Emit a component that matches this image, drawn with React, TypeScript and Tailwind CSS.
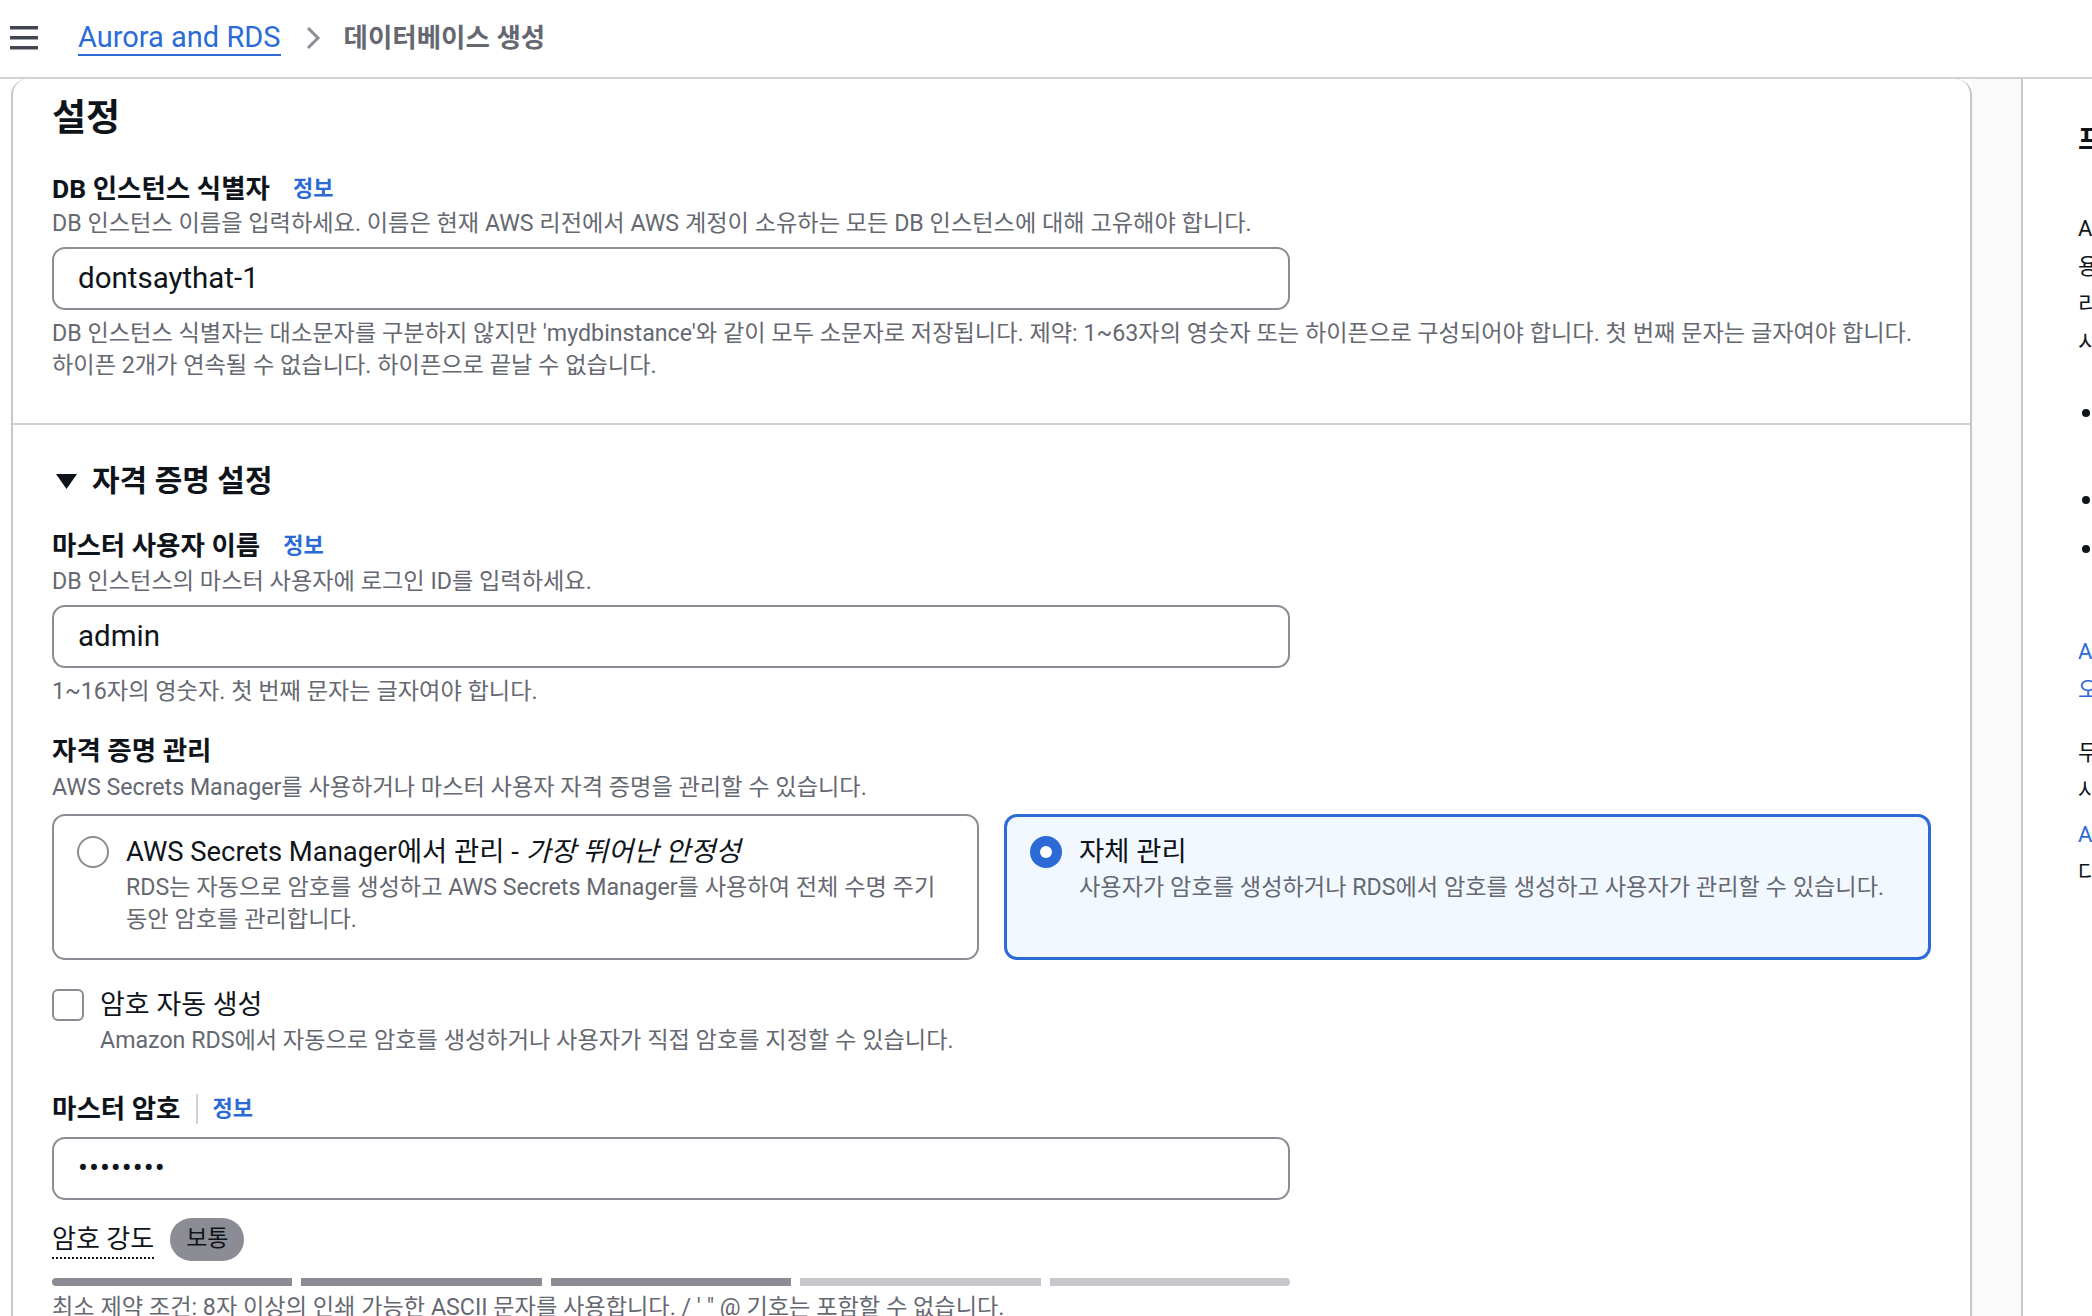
import React from "react";

function InfoLink() {
  return <span className="text-[22px] font-bold leading-[32px] text-[#2c6bd6]">정보</span>;
}

function Label({ children, info = true }: { children: React.ReactNode; info?: boolean }) {
  return (
    <div className="flex items-center gap-[23px]">
      <span className="text-[26.5px] font-bold leading-[32px] text-[#0f141a]">{children}</span>
      {info && <InfoLink />}
    </div>
  );
}

function Desc({ children, className = "" }: { children: React.ReactNode; className?: string }) {
  return <p className={`text-[23.2px] leading-[32px] text-[#656871] ${className}`}>{children}</p>;
}

function TextInput({ value, className = "" }: { value: string; className?: string }) {
  return (
    <div
      className={`flex h-[63px] w-[1238px] items-center rounded-[13px] border-2 border-[#8c8c94] bg-white px-[24px] text-[29.5px] text-[#0f141a] ${className}`}
    >
      {value}
    </div>
  );
}

function RadioCard({
  selected,
  title,
  desc,
}: {
  selected: boolean;
  title: React.ReactNode;
  desc: React.ReactNode;
}) {
  return (
    <div
      className={
        selected
          ? "h-[146px] rounded-[13px] border-[3px] border-[#2c6bd6] bg-[#f1f8ff] pl-[23px] pr-[24px] pt-[17px]"
          : "h-[146px] rounded-[13px] border-2 border-[#8c8c94] bg-white pl-[23px] pr-[24px] pt-[18px]"
      }
    >
      <div className="flex items-start gap-[17px]">
        {selected ? (
          <span className="mt-[2px] flex h-[32px] w-[32px] shrink-0 items-center justify-center rounded-full bg-[#2c6bd6]">
            <span className="h-[12px] w-[12px] rounded-full bg-white" />
          </span>
        ) : (
          <span className="mt-[2px] h-[32px] w-[32px] shrink-0 rounded-full border-2 border-[#8c8c94] bg-white" />
        )}
        <div>
          <div className="text-[27.4px] leading-[36px] text-[#0f141a]">{title}</div>
          <Desc className="mt-[1px]">{desc}</Desc>
        </div>
      </div>
    </div>
  );
}

function Bullet({ children, className = "" }: { children: React.ReactNode; className?: string }) {
  return (
    <div className={`flex items-center gap-[12px] ${className}`}>
      <span className="ml-[4px] h-[8px] w-[8px] shrink-0 rounded-full bg-[#0f141a]" />
      <span className="shrink-0">{children}</span>
    </div>
  );
}

function HelpPanel() {
  return (
    <div className="h-full overflow-hidden whitespace-nowrap pl-[55px] text-[22px] text-[#0f141a]">
      <h2 className="mt-[42px] text-[28px] font-bold leading-[40px]">프리 티어</h2>
      <div className="mt-[49px] leading-[38px]">
        <p>Amazon RDS 프리 티어를 사용하면</p>
        <p>용량 제한 내에서 데이터베이스를</p>
        <p>리소스 비용 없이 사용할 수 있습니다.</p>
        <p>시작하려면 다음을 선택하세요.</p>
      </div>
      <div className="mt-[32px] leading-[38px]">
        <Bullet>단일 AZ DB 인스턴스</Bullet>
        <p className="pl-[24px]">배포 옵션</p>
        <Bullet className="mt-[11px]">750시간 사용량</Bullet>
        <Bullet className="mt-[11px]">20GB 스토리지</Bullet>
      </div>
      <div className="mt-[65px] leading-[38px] text-[#2c6bd6]">
        <p>AWS 프리 티어에 대해</p>
        <p>오 자세히 알아보기</p>
      </div>
      <div className="mt-[25px] leading-[38px]">
        <p>두 개 이상의 인스턴스를</p>
        <p>사용하는 경우</p>
        <p className="mt-[6px] text-[#2c6bd6]">AWS 요금</p>
        <p>다 참조하세요.</p>
      </div>
    </div>
  );
}

export default function App() {
  return (
    <div className="flex h-[1316px] w-[2092px] flex-col overflow-hidden bg-white font-[Roboto,'Noto_Sans_CJK_KR',sans-serif]">
      <header className="flex h-[79px] shrink-0 items-center border-b-2 border-[#d1d1d6] pb-[2px]">
        <svg className="ml-[10px]" width="28" height="26" viewBox="0 0 28 26">
          <rect x="0" y="1" width="28" height="3.5" fill="#424650" />
          <rect x="0" y="11" width="28" height="3.5" fill="#424650" />
          <rect x="0" y="21" width="28" height="3.5" fill="#424650" />
        </svg>
        <span className="ml-[40px] border-b-2 border-[#2c6bd6] text-[29px] leading-[34px] text-[#2c6bd6]">
          Aurora and RDS
        </span>
        <svg className="ml-[24px]" width="16" height="24" viewBox="0 0 16 24">
          <path d="M3 2 L13 12 L3 22" fill="none" stroke="#8c8c94" strokeWidth="3" />
        </svg>
        <span className="ml-[23px] text-[26.5px] font-bold leading-[34px] text-[#656871]">데이터베이스 생성</span>
      </header>

      <div className="flex min-h-0 flex-1">
        <div className="w-[1972px] shrink-0 pl-[11px]">
          <div className="h-full rounded-t-[16px] border-x-2 border-[#c6c6cd] bg-white">
            <section className="pl-[39px] pr-[39px] pb-[42px] pt-[19px]">
              <h2 className="text-[37px] font-bold leading-[42px] text-[#0f141a]">설정</h2>
              <div className="mt-[33px]">
                <Label>DB 인스턴스 식별자</Label>
              </div>
              <Desc className="mt-[2px]">
                DB 인스턴스 이름을 입력하세요. 이름은 현재 AWS 리전에서 AWS 계정이 소유하는 모든 DB 인스턴스에 대해 고유해야 합니다.
              </Desc>
              <TextInput className="mt-[8px]" value="dontsaythat-1" />
              <Desc className="mt-[7px]">
                DB 인스턴스 식별자는 대소문자를 구분하지 않지만 'mydbinstance'와 같이 모두 소문자로 저장됩니다. 제약: 1~63자의 영숫자 또는 하이픈으로 구성되어야 합니다. 첫 번째 문자는 글자여야 합니다.
                <br />
                하이픈 2개가 연속될 수 없습니다. 하이픈으로 끝날 수 없습니다.
              </Desc>
            </section>

            <section className="border-t-2 border-[#d1d1d6] pl-[39px] pr-[39px] pt-[36px]">
              <div className="flex items-center gap-[15px]">
                <svg className="ml-[4px]" width="21" height="15" viewBox="0 0 21 15">
                  <path d="M0 0 H21 L10.5 15 Z" fill="#0f141a" />
                </svg>
                <h3 className="text-[30px] font-bold leading-[40px] text-[#0f141a]">자격 증명 설정</h3>
              </div>

              <div className="mt-[29px]">
                <Label>마스터 사용자 이름</Label>
              </div>
              <Desc className="mt-[3px]">DB 인스턴스의 마스터 사용자에 로그인 ID를 입력하세요.</Desc>
              <TextInput className="mt-[8px]" value="admin" />
              <Desc className="mt-[7px]">1~16자의 영숫자. 첫 번째 문자는 글자여야 합니다.</Desc>

              <div className="mt-[28px]">
                <Label info={false}>자격 증명 관리</Label>
              </div>
              <Desc className="mt-[4px]">AWS Secrets Manager를 사용하거나 마스터 사용자 자격 증명을 관리할 수 있습니다.</Desc>
              <div className="mt-[11px] grid grid-cols-2 gap-[25px]">
                <RadioCard
                  selected={false}
                  title={
                    <>
                      AWS Secrets Manager에서 관리 - <span className="italic">가장 뛰어난 안정성</span>
                    </>
                  }
                  desc={
                    <>
                      RDS는 자동으로 암호를 생성하고 AWS Secrets Manager를 사용하여 전체 수명 주기
                      <br />
                      동안 암호를 관리합니다.
                    </>
                  }
                />
                <RadioCard
                  selected
                  title="자체 관리"
                  desc="사용자가 암호를 생성하거나 RDS에서 암호를 생성하고 사용자가 관리할 수 있습니다."
                />
              </div>

              <div className="mt-[29px] flex items-center gap-[16px]">
                <span className="h-[32px] w-[32px] rounded-[6px] border-2 border-[#8c8c94] bg-white" />
                <span className="text-[27px] leading-[32px] text-[#0f141a]">암호 자동 생성</span>
              </div>
              <Desc className="mt-[3px] pl-[48px]">
                Amazon RDS에서 자동으로 암호를 생성하거나 사용자가 직접 암호를 지정할 수 있습니다.
              </Desc>

              <div className="mt-[37px] flex items-center">
                <span className="text-[26.5px] font-bold leading-[32px] text-[#0f141a]">마스터 암호</span>
                <span className="ml-[15px] h-[30px] w-[2px] bg-[#d1d1d6]" />
                <span className="ml-[15px]">
                  <InfoLink />
                </span>
              </div>
              <TextInput className="mt-[12px] tracking-[1px]" value="••••••••" />

              <div className="mt-[18px] flex items-center gap-[16px]">
                <span className="border-b-2 border-dotted border-[#0f141a] text-[26px] leading-[36px] text-[#0f141a]">
                  암호 강도
                </span>
                <span className="flex h-[43px] items-center rounded-full bg-[#8c8c94] px-[16px] text-[23px] text-[#0f141a]">
                  보통
                </span>
              </div>
              <div className="mt-[17px] flex w-[1238px] gap-[9px]">
                <span className="h-[8px] flex-1 rounded-l-full bg-[#8c8c94]" />
                <span className="h-[8px] flex-1 bg-[#8c8c94]" />
                <span className="h-[8px] flex-1 bg-[#8c8c94]" />
                <span className="h-[8px] flex-1 bg-[#c6c6cd]" />
                <span className="h-[8px] flex-1 rounded-r-full bg-[#c6c6cd]" />
              </div>
              <Desc className="mt-[5px]">
                최소 제약 조건: 8자 이상의 인쇄 가능한 ASCII 문자를 사용합니다. / ' " @ 기호는 포함할 수 없습니다.
              </Desc>
            </section>
          </div>
        </div>
        <div className="w-[49px] shrink-0 bg-[#fafafa]" />
        <div className="min-w-0 flex-1 border-l-2 border-[#c6c6cd]">
          <HelpPanel />
        </div>
      </div>
    </div>
  );
}
